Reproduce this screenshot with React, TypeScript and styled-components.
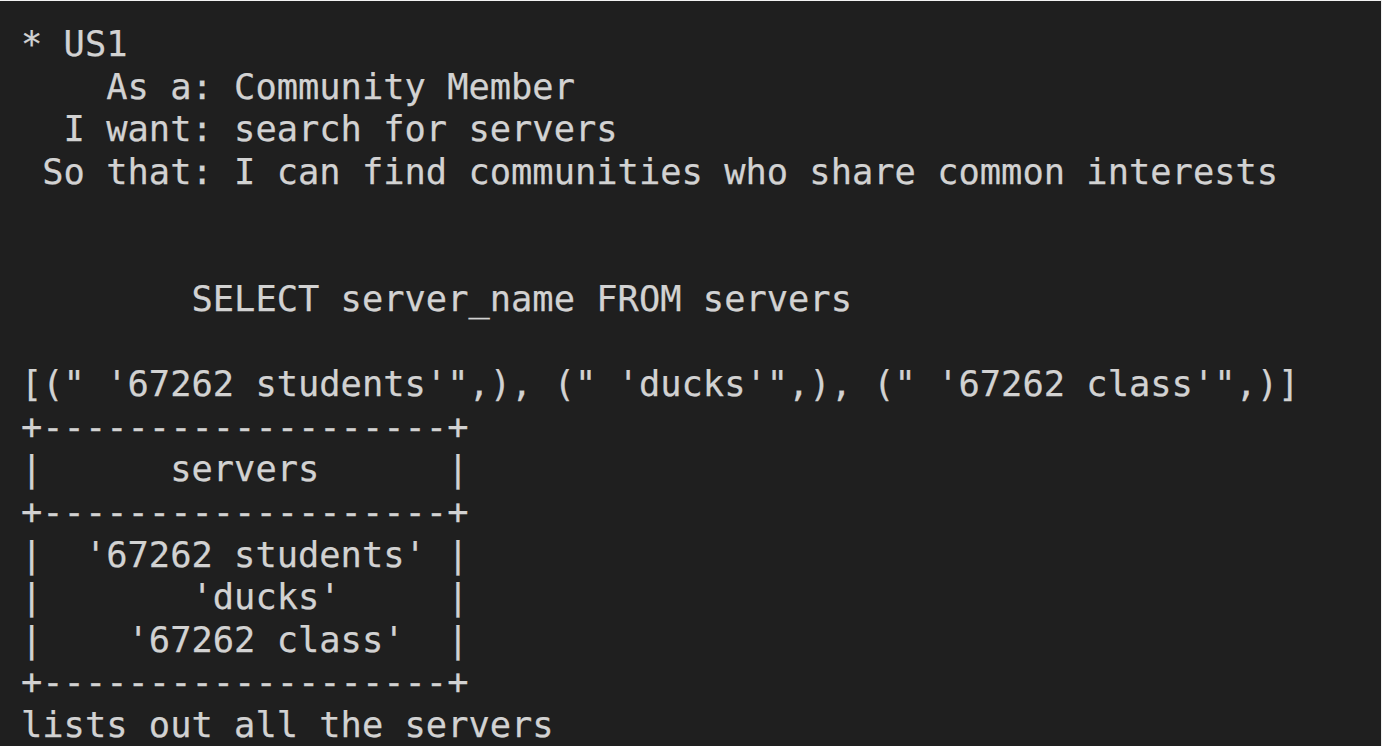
import React from "react";
import styled, { createGlobalStyle } from "styled-components";

const GlobalStyle = createGlobalStyle`
  html, body {
    margin: 0;
    padding: 0;
    background: #1f1f1f;
  }
  #root {
    min-height: 100vh;
  }
`;

const Terminal = styled.main`
  box-sizing: border-box;
  width: 1382px;
  height: 746px;
  overflow: hidden;
  background: #1f1f1f;
  border-top: 1px solid #f2f2f2;
  border-right: 1px solid #f2f2f2;
  padding: 22px 0 0 21px;
  display: flex;
  flex-direction: column;
`;

const Line = styled.div`
  font-family: "DejaVu Sans Mono", "Liberation Mono", monospace;
  font-size: 35.4px;
  line-height: 42.55px;
  height: 42.55px;
  color: #d2d2d2;
  white-space: pre;
  letter-spacing: 0;
  -webkit-text-stroke: 0.25px #d2d2d2;
`;

const lines = [
  "* US1",
  "    As a: Community Member",
  "  I want: search for servers",
  " So that: I can find communities who share common interests",
  "",
  "",
  "        SELECT server_name FROM servers",
  "",
  `[(" '67262 students'",), (" 'ducks'",), (" '67262 class'",)]`,
  "+-------------------+",
  "|      servers      |",
  "+-------------------+",
  "|  '67262 students' |",
  "|       'ducks'     |",
  "|    '67262 class'  |",
  "+-------------------+",
  "lists out all the servers",
];

export default function App() {
  return (
    <>
      <GlobalStyle />
      <Terminal>
        {lines.map((l, i) => (
          <Line key={i}>{l || " "}</Line>
        ))}
      </Terminal>
    </>
  );
}
